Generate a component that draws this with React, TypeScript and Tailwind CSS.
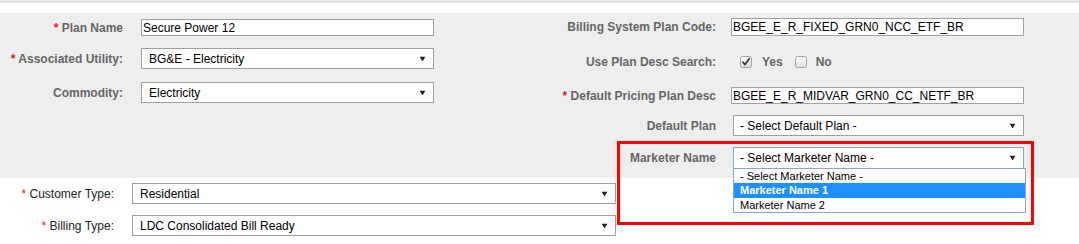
import React from "react";

function Arrow() {
  return (
    <svg
      width="7"
      height="5"
      viewBox="0 0 7 5"
      className="absolute right-[7px] top-1/2 -translate-y-1/2"
    >
      <path d="M0.5 0H6.5L3.5 5Z" fill="#222" />
    </svg>
  );
}

function Star() {
  return <span className="text-[#e8191f]">* </span>;
}

function Box({ checked }: { checked?: boolean }) {
  return (
    <svg width="12" height="12" viewBox="0 0 12 12" className="shrink-0">
      <defs>
        <linearGradient id={checked ? "gc" : "gu"} x1="0" y1="0" x2="0" y2="1">
          <stop offset="0" stopColor="#fbfbfb" />
          <stop offset="1" stopColor="#dedede" />
        </linearGradient>
      </defs>
      <rect
        x="0.5"
        y="0.5"
        width="11"
        height="11"
        rx="2"
        fill={checked ? "url(#gc)" : "url(#gu)"}
        stroke="#a3a3a3"
      />
      {checked && (
        <path
          d="M3 6.2L5 8.6L9.2 2.8"
          fill="none"
          stroke="#333"
          strokeWidth="1.7"
          strokeLinecap="round"
          strokeLinejoin="round"
        />
      )}
    </svg>
  );
}

export default function App() {
  return (
    <div className="relative w-[1079px] h-[244px] overflow-hidden bg-white font-['Liberation_Sans',Arial,sans-serif] text-[12px]">
      <div className="h-[3px] bg-[#e2e2e2]" />
      <div className="h-[10px]" />

      {/* gray panel */}
      <div className="flex h-[165px] bg-[#eeeeee]">
        {/* left column */}
        <div className="flex w-[434px] flex-col pt-[6px]">
          <div className="flex h-[17px] items-center">
            <div className="w-[123px] text-right font-bold text-[#666]">
              <Star />
              Plan Name
            </div>
            <div className="ml-[18px] flex h-[17px] w-[293px] items-center border border-[#a0a0a0] bg-white pl-[1px] text-black">
              Secure Power 12
            </div>
          </div>
          <div className="mt-[12px] flex h-[21px] items-center">
            <div className="w-[123px] text-right font-bold text-[#666]">
              <Star />
              Associated Utility:
            </div>
            <div className="relative ml-[18px] flex h-[21px] w-[293px] items-center border border-[#a0a0a0] bg-white pl-[7px] text-black">
              BG&amp;E - Electricity
              <Arrow />
            </div>
          </div>
          <div className="mt-[13px] flex h-[21px] items-center">
            <div className="w-[123px] text-right font-bold text-[#666]">Commodity:</div>
            <div className="relative ml-[18px] flex h-[21px] w-[293px] items-center border border-[#a0a0a0] bg-white pl-[7px] text-black">
              Electricity
              <Arrow />
            </div>
          </div>
        </div>

        {/* right column */}
        <div className="flex flex-col pt-[5px]">
          <div className="flex h-[18px] items-center">
            <div className="w-[282px] text-right font-bold text-[#666]">Billing System Plan Code:</div>
            <div className="ml-[15px] flex h-[18px] w-[293px] items-center border border-[#a0a0a0] bg-white pl-[1px] text-black">
              BGEE_E_R_FIXED_GRN0_NCC_ETF_BR
            </div>
          </div>
          <div className="mt-[15px] flex h-[21px] items-center">
            <div className="w-[282px] text-right font-bold text-[#666]">Use Plan Desc Search:</div>
            <div className="ml-[24px] flex items-center font-bold text-[#666]">
              <Box checked />
              <span className="ml-[10px]">Yes</span>
              <span className="ml-[12px] flex">
                <Box />
              </span>
              <span className="ml-[9px]">No</span>
            </div>
          </div>
          <div className="mt-[15px] flex h-[17px] items-center">
            <div className="w-[282px] text-right font-bold text-[#666]">
              <Star />
              Default Pricing Plan Desc
            </div>
            <div className="ml-[15px] flex h-[17px] w-[293px] items-center border border-[#a0a0a0] bg-white pl-[1px] text-black">
              BGEE_E_R_MIDVAR_GRN0_CC_NETF_BR
            </div>
          </div>
          <div className="mt-[11px] flex h-[21px] items-center">
            <div className="w-[282px] text-right font-bold text-[#666]">Default Plan</div>
            <div className="relative ml-[17px] flex h-[21px] w-[291px] items-center border border-[#a0a0a0] bg-white pl-[6px] text-black">
              - Select Default Plan -
              <Arrow />
            </div>
          </div>
          <div className="mt-[11px] flex h-[22px] items-center">
            <div className="w-[282px] text-right font-bold text-[#666]">Marketer Name</div>
            <div className="relative ml-[17px] flex h-[22px] w-[291px] items-center border border-[#86a5d8] bg-white pl-[6px] text-black">
              - Select Marketer Name -
              <Arrow />
              <div className="absolute left-[-1px] top-full z-10 flex w-[293px] flex-col border border-[#86a5d8] bg-white text-[11px] leading-[14px] text-black">
                <div className="h-[14px] pl-[6px]">- Select Marketer Name -</div>
                <div className="h-[15px] bg-[#1e90ff] pl-[6px] font-bold leading-[15px] text-white">
                  Marketer Name 1
                </div>
                <div className="h-[14px] pl-[6px]">Marketer Name 2</div>
              </div>
            </div>
          </div>
        </div>
      </div>

      {/* bottom section */}
      <div className="flex flex-col pt-[5px]">
        <div className="flex h-[21px] items-center">
          <div className="w-[114px] text-right text-[#222]">
            <Star />
            Customer Type:
          </div>
          <div className="relative ml-[18px] flex h-[21px] w-[484px] items-center border border-[#a0a0a0] bg-white pl-[7px] text-black">
            Residential
            <Arrow />
          </div>
        </div>
        <div className="mt-[11px] flex h-[21px] items-center">
          <div className="w-[114px] text-right text-[#222]">
            <Star />
            Billing Type:
          </div>
          <div className="relative ml-[18px] flex h-[21px] w-[484px] items-center border border-[#a0a0a0] bg-white pl-[7px] text-black">
            LDC Consolidated Bill Ready
            <Arrow />
          </div>
        </div>
      </div>

      {/* annotation box */}
      <div className="pointer-events-none absolute left-[617px] top-[141px] h-[84px] w-[417px] border-[3px] border-[#ff0000]" />
    </div>
  );
}
